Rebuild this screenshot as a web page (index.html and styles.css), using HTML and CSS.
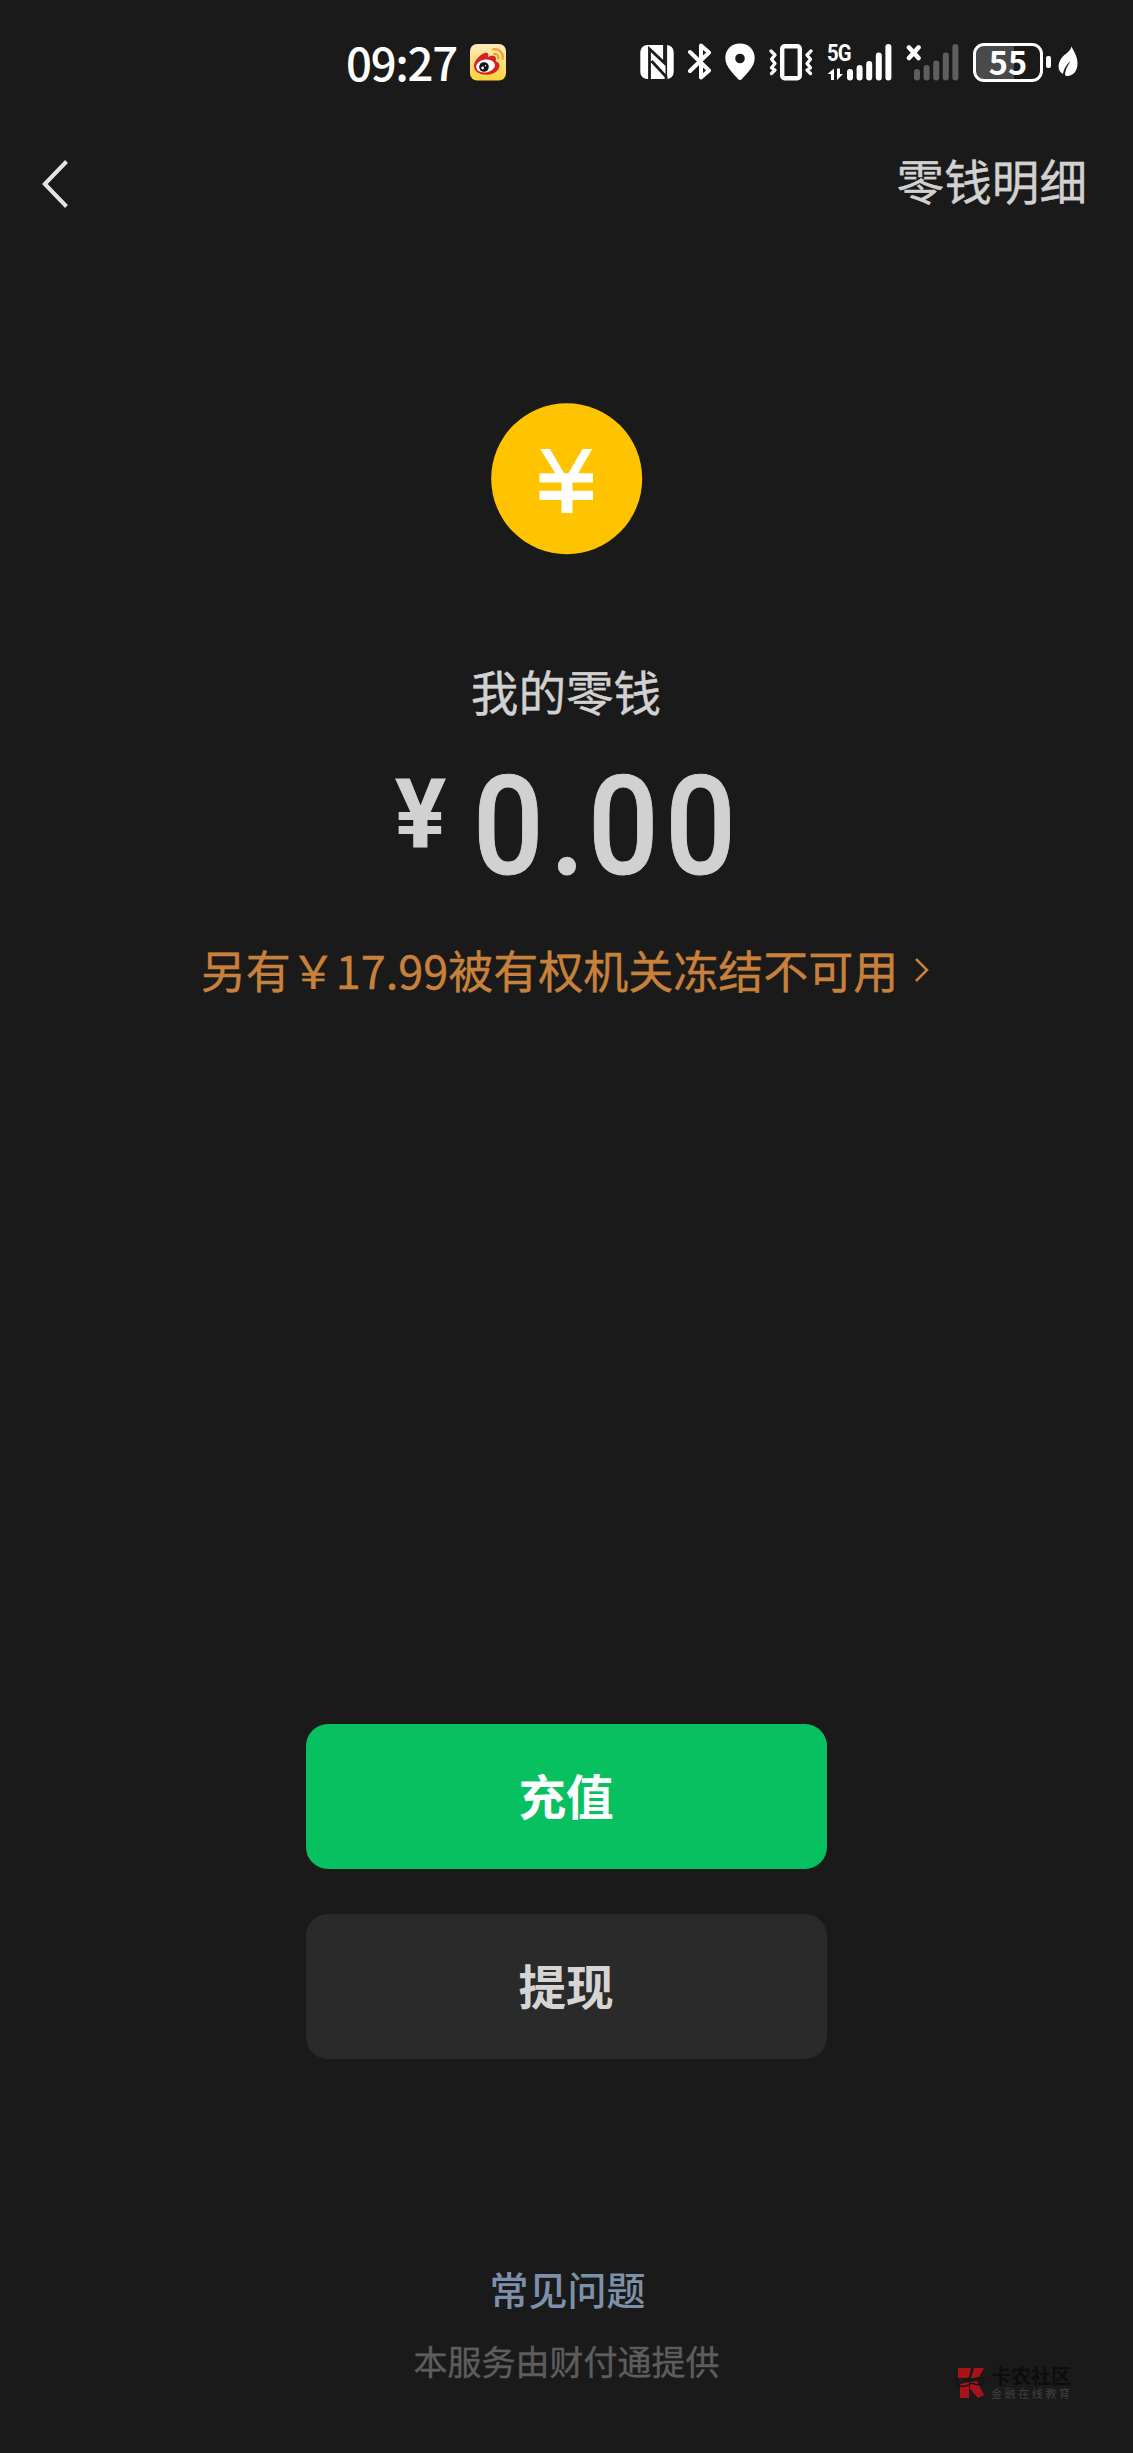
FILE: index.html
```html
<!DOCTYPE html>
<html lang="zh-CN">
<head>
<meta charset="utf-8">
<title>零钱</title>
<link rel="stylesheet" href="styles.css">
</head>
<body>
<header class="status">
  <div class="status-left">
    <span class="clock">09:27</span>
    <svg class="weibo" width="36" height="37" viewBox="0 0 36 37">
      <defs><linearGradient id="wb" x1="0" y1="0" x2="0" y2="1"><stop offset="0" stop-color="#fdebbc"/><stop offset="1" stop-color="#fcd23c"/></linearGradient></defs>
      <rect width="36" height="36.500" rx="7" fill="url(#wb)"/>
      <path d="M4 22C4 16 11 10 15 9c3-1 4 1 3 4 4-2 8-2 8 2 0 1-.4 2-.3 2.300C31 19 30 24 27 27c-6 6-23 5-23-5z" fill="#d8201f"/>
      <ellipse cx="15.500" cy="22" rx="9.500" ry="6.500" fill="#fff" transform="rotate(-8 15.500 22)"/>
      <circle cx="14" cy="23" r="4.800" fill="#111"/><circle cx="12.600" cy="24" r="1.400" fill="#fff"/><circle cx="15.500" cy="21.800" r=".8" fill="#fff"/>
      <path d="M23 5.500c6-1.500 11 4 9.500 9.500M24 10c3-.5 5 2 4.300 4.500" fill="none" stroke="#f2a02c" stroke-width="2.200" stroke-linecap="round"/>
    </svg>
  </div>
  <div class="status-right">
    <svg width="34" height="44" viewBox="641 40 34 44">
      <rect x="641.300" y="45" width="33.400" height="34" rx="7" fill="#fff"/>
      <path d="M650.500 79V49L665.500 63V45M652.500 61L667 76.500V79" fill="none" stroke="#1a1a1a" stroke-width="2.800"/>
      <path d="M667.300 45V77" fill="none" stroke="#1a1a1a" stroke-width="1.600"/>
    </svg>
    <svg width="24" height="44" viewBox="689 40 24 44"><path d="M691 52l19 18.500-8 7V45.500l8 7L691 71" fill="none" stroke="#fff" stroke-width="4" stroke-linecap="round" stroke-linejoin="round"/></svg>
    <svg width="30" height="44" viewBox="726 40 30 44"><path fill-rule="evenodd" d="M741 43.500c8.500 0 14.700 6 14.700 14.500C755.700 67 747 74 743 79q-2 2-4 0c-4-5-12.700-12-12.700-21 0-8.500 6.200-14.500 14.700-14.500zM741 53.700a4.800 4.800 0 1 0 0 9.600 4.800 4.800 0 0 0 0-9.600z" fill="#fff"/></svg>
    <svg width="44" height="44" viewBox="770 40 44 44"><g fill="none" stroke="#fff" stroke-linecap="round" stroke-linejoin="round"><rect x="783.200" y="46.200" width="17.600" height="32" rx="2.500" stroke-width="4.400"/><path d="M772 51l4 4-3.500 4.300 3.500 4.200-3.500 4.300 3.500 2.200-3.500 3.500M812 51l-4 4 3.500 4.300-3.500 4.200 3.500 4.300-3.500 2.200 3.500 3.500" stroke-width="3.200"/></g></svg>
    <div class="cell">
      <span class="net">5G</span>
      <svg width="65" height="44" viewBox="828 40 65 44"><g fill="#fff"><path d="M835 68.500v11.500h-3v-6h-3.500zM838 68.500v11.500l6-6h-3v-5.500z"/><rect x="848" y="69" width="6" height="11.500" rx="3"/><rect x="857.600" y="65" width="6" height="15.500" rx="3"/><rect x="867.200" y="61" width="6" height="19.500" rx="3"/><rect x="876.800" y="52.500" width="6" height="28" rx="3"/><rect x="886.400" y="44" width="6" height="36.500" rx="3"/></g></svg>
    </div>
    <svg width="53" height="44" viewBox="907 40 53 44"><path d="M910 47.500l9.500 10.500M919.500 47.500l-9.500 10.500" stroke="#fff" stroke-width="4.600" stroke-linecap="round"/><g fill="#5e5e5e"><rect x="915" y="69" width="6" height="11.500" rx="3"/><rect x="924.600" y="65" width="6" height="15.500" rx="3"/><rect x="934.200" y="60.500" width="6" height="20" rx="3"/><rect x="943.800" y="52.500" width="6" height="28" rx="3"/><rect x="953.400" y="44" width="6" height="36.500" rx="3"/></g></svg>
    <div class="battery"><span class="level">55</span></div>
    <i class="nub"></i>
    <svg width="22" height="44" viewBox="1057 40 22 44"><path d="M1071.500 46.500c3 6 6 10 6 17 0 7-4 12-9.500 12.500-2 .2-3-.5-3-1.500.5-6 3-9 5.500-13.500-4.500 4-7 8-7.500 13-6.500-3-5-12-1-16.500 3.500-4 8-5.500 9.500-11z" fill="#fff"/></svg>
  </div>
</header>
<nav class="nav">
  <svg width="30" height="50" viewBox="40 159 30 50"><path d="M66.500 161.500L44.800 184 66.500 206.500" fill="none" stroke="#e4e4e4" stroke-width="4"/></svg>
  <a class="detail">零钱明细</a>
</nav>
<main class="main">
  <svg class="coin" width="152" height="152" viewBox="0 0 152 152"><circle cx="75.700" cy="75.700" r="75.500" fill="#ffc300"/><path d="M49.200 46h9.800l16.200 28L91.500 46h9.700L81.500 80v30h-11V80zM48.500 70.300H102v9.200H48.500zM48.500 87.700H102v9.200H48.500z" fill="#fff"/></svg>
  <h1 class="title">我的零钱</h1>
  <div class="balance"><span class="yen">¥</span><span class="num">0<span class="dot">.</span>00</span></div>
  <a class="frozen"><span>另有￥17.99被有权机关冻结不可用</span><svg width="16" height="28" viewBox="0 0 16 28"><path d="M2 3l11 11L2 25" fill="none" stroke="#c8813a" stroke-width="2.500"/></svg></a>
</main>
<div class="actions">
  <button class="btn primary">充值</button>
  <button class="btn">提现</button>
</div>
<footer class="footer">
  <a class="faq">常见问题</a>
  <p class="provider">本服务由财付通提供</p>
</footer>
<div class="mark">
  <svg width="32" height="34" viewBox="0 0 32 34"><path d="M2 2h13l-2 9-8 3-3-2zM18 2h10l-6 11-7-1zM4 18l9-2v16H4zM14 16l7-1 7 14-6 3-8-9z" fill="#a81219"/><path d="M1 17c-3-6 8-5 13-2 6-4 16-5 14 1-2 4-8 3-12 1-6 4-13 5-15 0z" fill="none" stroke="#141414" stroke-width="1.500"/></svg>
  <div><div class="mark-name">卡农社区</div><div class="mark-sub">金融在线教育</div></div>
</div>
</body>
</html>
```
FILE: styles.css
```css
* { box-sizing: border-box; }
body {
  margin: 0;
  width: 1133px;
  height: 2453px;
  position: relative;
  display: flex;
  flex-direction: column;
  background: #1a1a1a;
  color: #d1d1d1;
  font-family: "Noto Sans CJK SC", sans-serif;
  overflow: hidden;
}
svg { display: block; flex: none; }
.status {
  height: 124px;
  flex: none;
  padding: 40px 54px 0 346px;
  display: flex;
  justify-content: space-between;
  align-items: flex-start;
}
.status-left, .status-right { display: flex; height: 44px; }
.clock {
  width: 124px;
  font-size: 45.500px;
  line-height: 42px;
  letter-spacing: -1.300px;
  font-weight: 500;
  color: #fff;
  white-space: nowrap;
}
.weibo { margin-top: 4px; }
.status-right { gap: 14px; }
.status-right > svg:nth-child(2) { margin-right: -1px; }
.cell { display: grid; }
.cell > * { grid-area: 1 / 1; }
.net {
  font: 700 23px/28px Roboto, sans-serif;
  letter-spacing: -1px;
  color: #fff;
  transform: scaleX(.88);
  transform-origin: left;
}
.battery {
  width: 70px;
  height: 39px;
  margin-top: 2.500px;
  border: 3px solid #fff;
  border-radius: 11px;
  background: linear-gradient(90deg, #4a4a4a 38px, transparent 38px);
  text-align: center;
}
.level {
  display: block;
  color: #fff;
  font: 700 32.500px/30px "Noto Sans CJK SC", sans-serif;
}
.nub {
  width: 5px;
  height: 12px;
  margin: 16px -8px 0 -11px;
  border-radius: 2px;
  background: #fff;
}
.nav {
  height: 120px;
  flex: none;
  padding: 0 46px 0 40px;
  display: flex;
  justify-content: space-between;
  align-items: center;
}
.detail, .title, .frozen, .provider { -webkit-text-stroke: .4px currentColor; }
.detail { font-size: 47.600px; line-height: 60px; margin-bottom: 8px; }
.main {
  height: 1480px;
  flex: none;
  padding-top: 158.500px;
  display: flex;
  flex-direction: column;
  align-items: center;
}
.title {
  margin: 101px 1px 0 0;
  font-size: 47.600px;
  line-height: 70px;
  font-weight: 400;
}
.balance {
  width: 344px;
  height: 140px;
  margin-top: 31px;
  display: flex;
  align-items: flex-start;
  font-family: Roboto, sans-serif;
  color: #d1d1d1;
}
.yen { flex: none; width: 78px; font-size: 97px; line-height: 114px; font-weight: 700; }
.num {
  flex: none;
  font-size: 138px;
  line-height: 140px;
  font-weight: 500;
  letter-spacing: 7.500px;
  -webkit-text-stroke: 1px currentColor;
  transform: scaleX(.9);
  transform-origin: left center;
}
.dot { letter-spacing: 3.500px; }
.frozen {
  margin: 40px 2px 0 0;
  display: flex;
  align-items: center;
  gap: 16px;
  font-size: 45px;
  line-height: 66px;
  color: #c8813a;
}
.actions { display: flex; flex-direction: column; align-items: center; gap: 45px; }
.btn {
  width: 521px;
  height: 145px;
  padding: 0 1px 4px 0;
  border: 0;
  border-radius: 22px;
  background: #2a2a2a;
  color: #d5d5d5;
  font: 700 47.600px/70px "Noto Sans CJK SC", sans-serif;
}
.primary { background: #07c160; color: #fff; }
.footer {
  margin-top: 201px;
  display: flex;
  flex-direction: column;
  align-items: center;
}
.faq { margin-left: 2px; font-size: 39px; line-height: 56px; font-weight: 500; color: #7d90a9; }
.provider { margin: 20px 0 0; font-size: 34px; line-height: 50px; color: #5d5d5d; }
.mark {
  position: absolute;
  left: 956px;
  top: 2366px;
  display: flex;
  gap: 3px;
}
.mark-name { font-size: 20px; line-height: 20px; font-weight: 700; color: #0d0d0d; }
.mark-sub { margin-top: 1px; font-size: 11px; line-height: 12px; letter-spacing: 2.600px; color: #404040; }
```
